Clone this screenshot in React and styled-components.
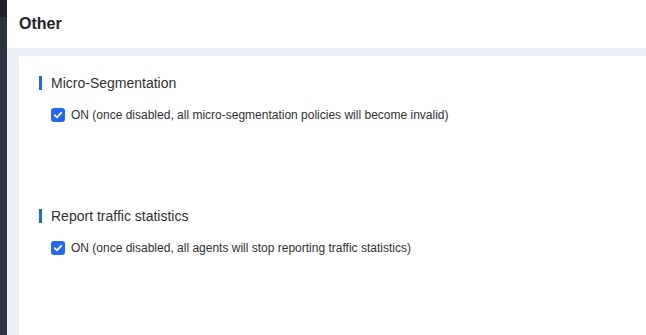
import styled, { createGlobalStyle } from 'styled-components'

const Global = createGlobalStyle`
    html, body {
        margin: 0;
        padding: 0;
        height: 100%;
        overflow: hidden;
    }
    body {
        font-family: "Liberation Sans", Arial, sans-serif;
        color: #303133;
    }
    #root {
        height: 100%;
    }
`

const Layout = styled.div`
    display: flex;
    height: 335px;
`

const Sidebar = styled.div`
    width: 7px;
    flex-shrink: 0;
    background: #2d3340;
    display: flex;
    flex-direction: column;

    &::before{
        content: '';
        height: 17px;
        background: #1f2329;
    }
`

const Main = styled.div`
    flex: 1;
    display: flex;
    flex-direction: column;
    background: #ebeef5;
    min-width: 0;
`

const Header = styled.div`
    height: 48px;
    background: #fff;
    display: flex;
    align-items: center;
    padding-left: 12px;
    margin-bottom: 8px;

    h1{
        margin: 0;
        font-size: 16px;
        font-weight: 700;
        color: #1f2329;
    }
`

const Panel = styled.div`
    flex: 1;
    background: #fff;
    margin-left: 12px;
    padding: 19px 20px 0;
    display: flex;
    flex-direction: column;
    gap: 86px;
`

const Section = styled.div`
    display: flex;
    flex-direction: column;
    gap: 17px;
`

const SectionTitle = styled.div`
    display: flex;
    align-items: center;
    gap: 9px;
    font-size: 14px;
    color: #303133;
    line-height: 16px;

    &::before{
        content: '';
        width: 3px;
        height: 14px;
        background: #2468f2;
    }
`

const CheckRow = styled.label`
    display: flex;
    align-items: center;
    gap: 6px;
    padding-left: 12px;
    font-size: 12px;
    color: #303133;
`

const Box = styled.span`
    width: 14px;
    height: 14px;
    border-radius: 3px;
    background: ${p => p.checked ? '#2468f2' : '#fff'};
    display: inline-flex;
    align-items: center;
    justify-content: center;
    flex-shrink: 0;
`

const Check = ({ checked = true }) => (
    <Box checked={checked}>
        <svg width="10" height="10" viewBox="0 0 10 10">
            <path d="M1.6 5.2 L4 7.4 L8.4 2.6" fill="none" stroke="#fff" strokeWidth="1.7" strokeLinecap="round" strokeLinejoin="round"/>
        </svg>
    </Box>
)

const settings = [
    { title: 'Micro-Segmentation', text: 'ON (once disabled, all micro-segmentation policies will become invalid)' },
    { title: 'Report traffic statistics', text: 'ON (once disabled, all agents will stop reporting traffic statistics)' },
]

const App = () => {
    return (
        <>
            <Global />
            <Layout>
                <Sidebar />
                <Main>
                    <Header>
                        <h1>Other</h1>
                    </Header>
                    <Panel>
                        {settings.map(s => (
                            <Section key={s.title}>
                                <SectionTitle>{s.title}</SectionTitle>
                                <CheckRow>
                                    <Check />
                                    {s.text}
                                </CheckRow>
                            </Section>
                        ))}
                    </Panel>
                </Main>
            </Layout>
        </>
    )
}

export default App
